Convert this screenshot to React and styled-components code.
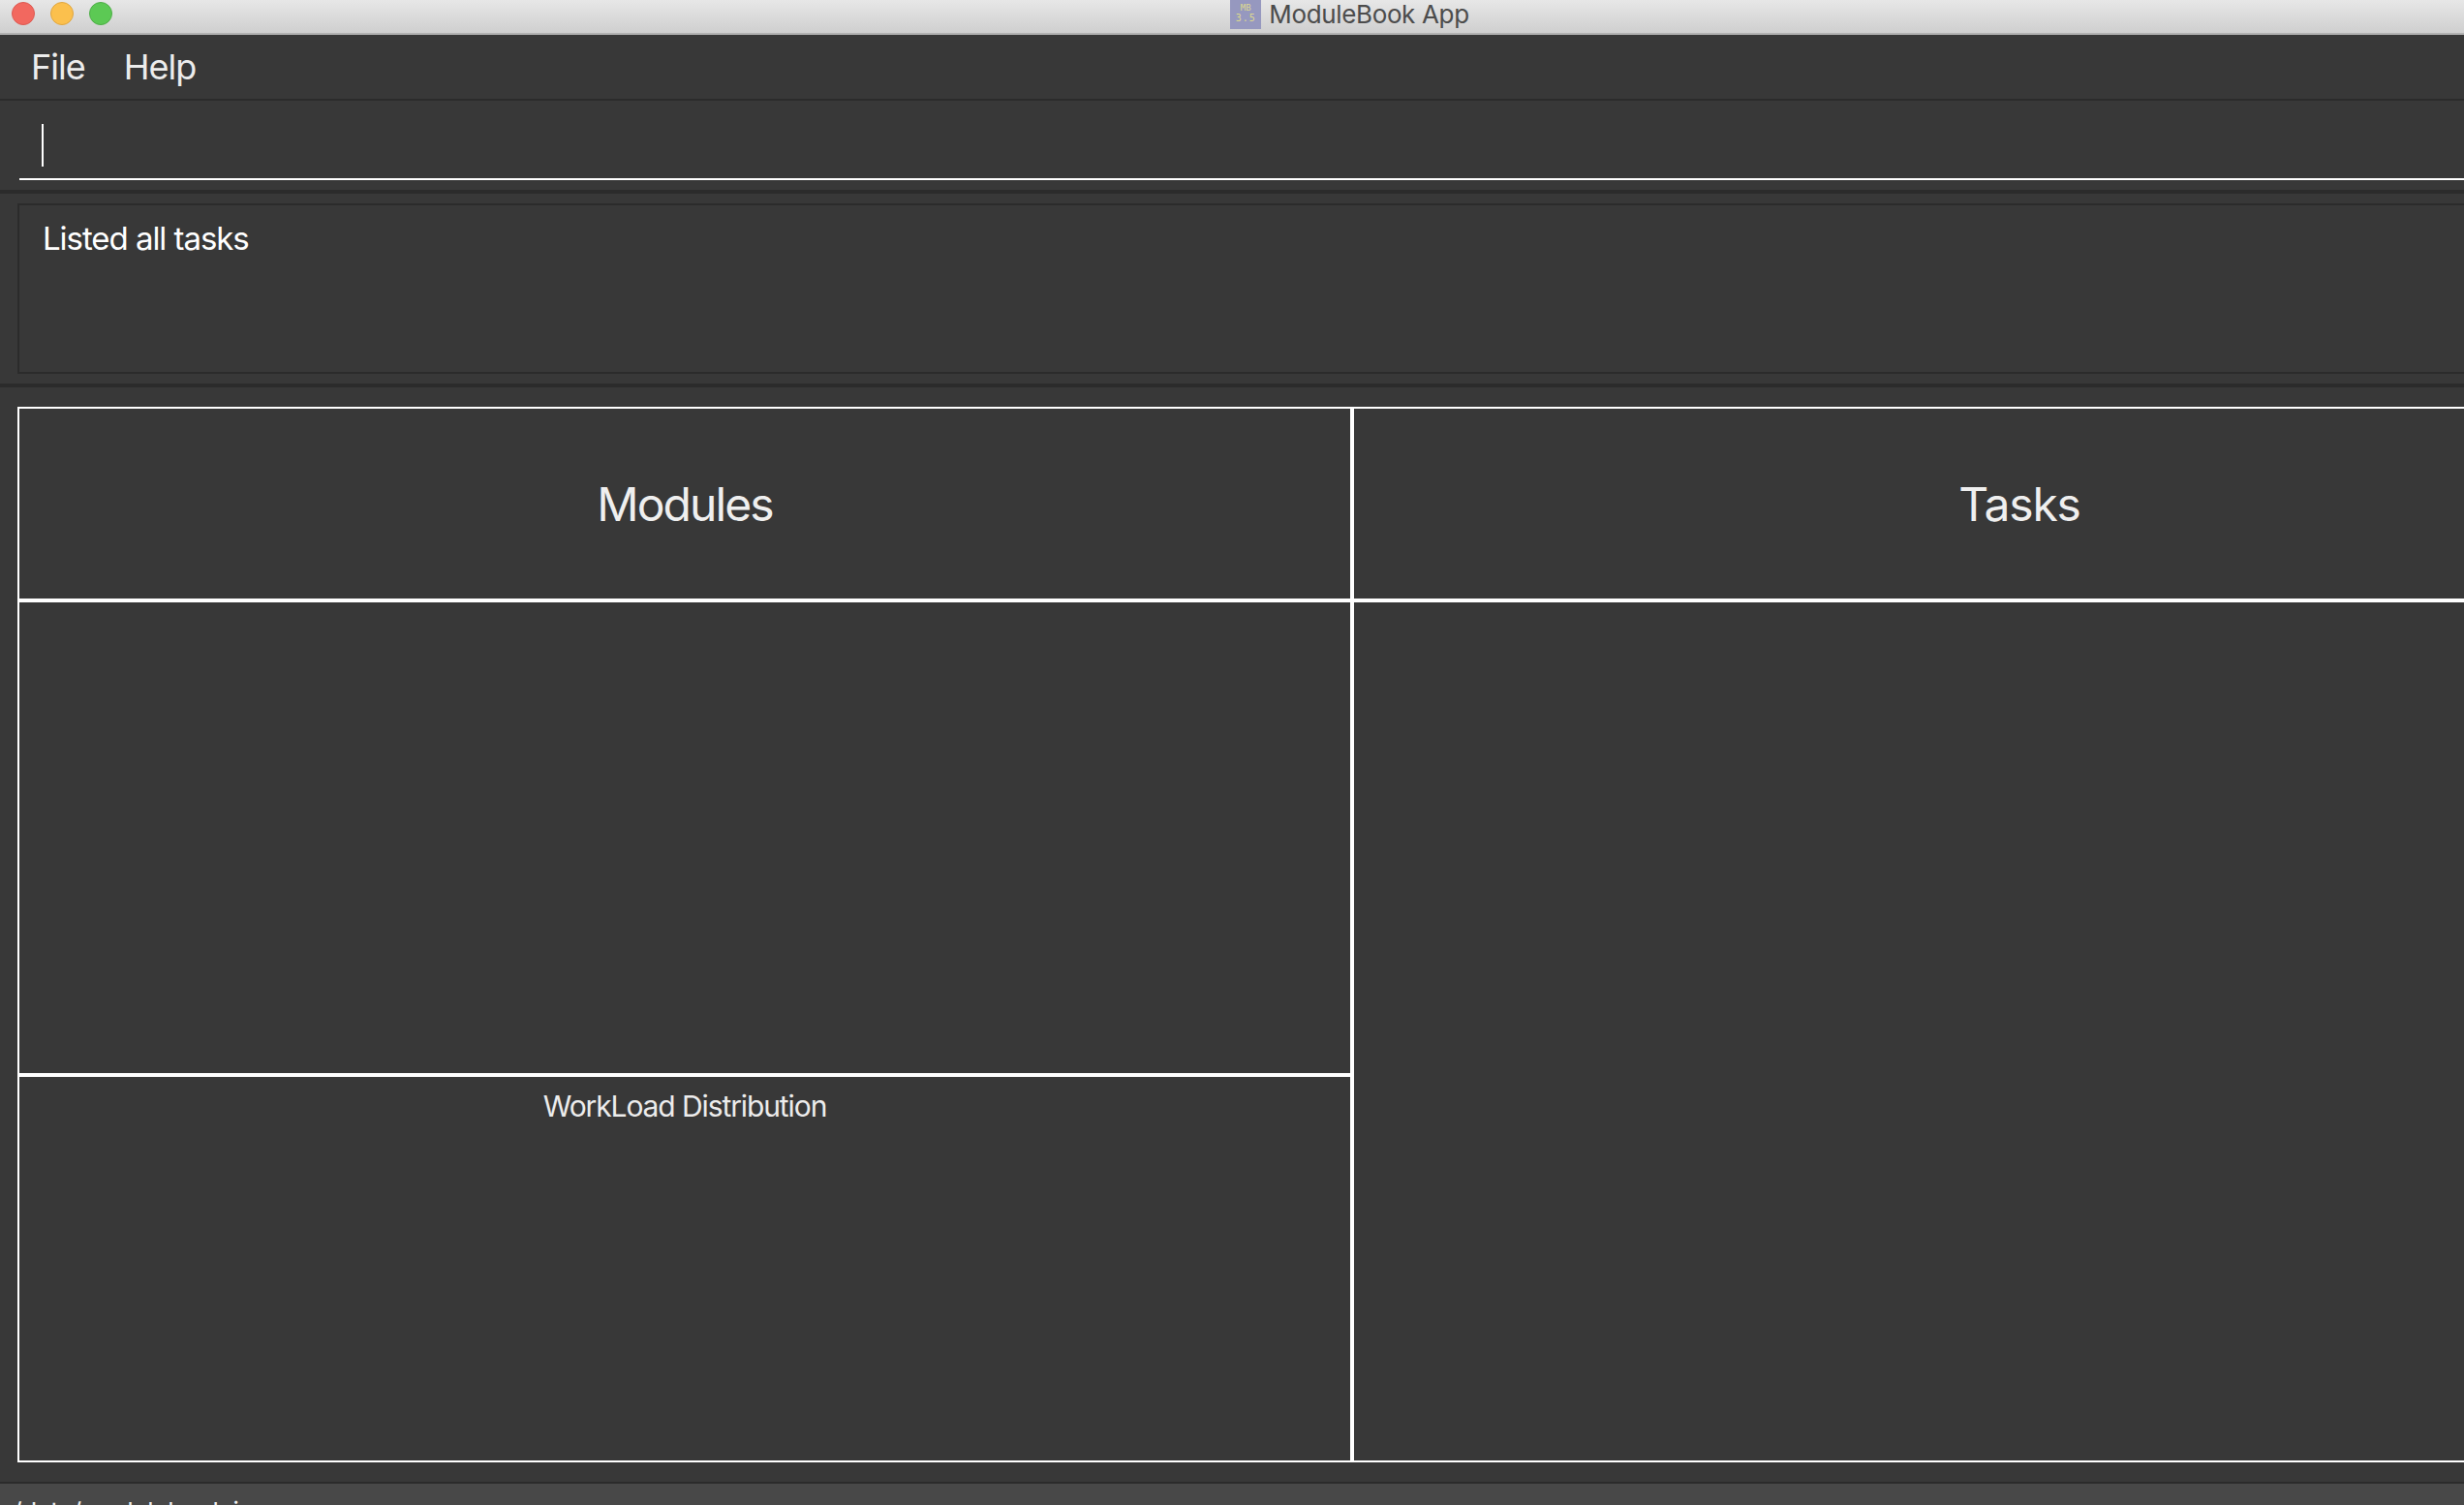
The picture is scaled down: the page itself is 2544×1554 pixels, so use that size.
import React from "react";
import styled, { createGlobalStyle } from "styled-components";

const Global = createGlobalStyle`
  html, body { margin: 0; padding: 0; background: #383838; overflow: hidden; }
  body { font-family: Inter, "Liberation Sans", sans-serif; }
`;

const Viewport = styled.div`
  width: 2544px;
  height: 1554px;
  overflow: hidden;
`;

const Frame = styled.div`
  width: 2792px;
  height: 1554px;
  display: flex;
  flex-direction: column;
  background: #383838;
  overflow: hidden;
`;

const TitleBar = styled.header`
  flex: none;
  position: relative;
  height: 36px;
  box-sizing: border-box;
  display: flex;
  justify-content: center;
  align-items: flex-start;
  gap: 8px;
  padding-right: 5px;
  background: linear-gradient(#e7e7e7, #cfcfcf);
  border-bottom: 2px solid #b1b1b1;
`;

const Lights = styled.div`
  position: absolute;
  left: 12px;
  top: 2px;
  display: flex;
  gap: 16px;
`;

const Light = styled.span`
  width: 24px;
  height: 24px;
  box-sizing: border-box;
  border-radius: 50%;
  background: ${(p) => p.$fill};
  border: 1px solid ${(p) => p.$edge};
`;

const AppIcon = styled.div`
  width: 32px;
  height: 30px;
  background: #9698bf;
  color: #dcd98f;
  font-family: "DejaVu Sans Mono", monospace;
  text-align: center;
  line-height: 1;
  display: flex;
  flex-direction: column;
  align-items: center;
  padding-top: 3px;
  box-sizing: border-box;
`;

const IconTop = styled.span`
  font-size: 9px;
  line-height: 10px;
`;

const IconBottom = styled.span`
  font-size: 10px;
  line-height: 11px;
  letter-spacing: 1px;
`;

const WindowTitle = styled.span`
  font-size: 26px;
  line-height: 30px;
  color: #4c4c4c;
  letter-spacing: -0.35px;
`;

const MenuBar = styled.nav`
  flex: none;
  height: 68px;
  box-sizing: border-box;
  display: flex;
  align-items: center;
  gap: 40px;
  padding: 0 0 1px 32px;
  border-bottom: 2px solid #2b2b2b;
`;

const MenuItem = styled.span`
  font-size: 36px;
  letter-spacing: -1px;
  color: #ececec;
`;

const CommandPane = styled.section`
  flex: none;
  height: 92px;
  box-sizing: border-box;
  padding: 0 0 10px 20px;
`;

const CommandInput = styled.div`
  height: 82px;
  box-sizing: border-box;
  border-bottom: 2px solid #ffffff;
  display: flex;
  align-items: flex-start;
  padding: 24px 0 0 23px;
`;

const Caret = styled.div`
  width: 2px;
  height: 44px;
  background: #ffffff;
`;

const ResultPane = styled.section`
  flex: none;
  height: 200px;
  box-sizing: border-box;
  border-top: 4px solid #2b2b2b;
  padding: 10px 0 10px 18px;
`;

const ResultBox = styled.div`
  height: 176px;
  box-sizing: border-box;
  border: 2px solid #2b2b2b;
  padding: 13px 0 0 24px;
  font-size: 33px;
  line-height: 42px;
  letter-spacing: -1.05px;
  color: #ffffff;
`;

const Board = styled.main`
  flex: none;
  height: 1136px;
  box-sizing: border-box;
  border-top: 4px solid #2b2b2b;
  border-bottom: 2px solid #2b2b2b;
  padding: 20px 0 20px 18px;
`;

const BoardGrid = styled.div`
  width: 2754px;
  height: 1090px;
  box-sizing: border-box;
  display: grid;
  grid-template-columns: 1374px 1374px;
  grid-template-rows: 196px 486px 396px;
  gap: 4px;
  padding: 2px;
  background: #ffffff;
`;

const Cell = styled.div`
  background: #383838;
  ${(p) => p.$tall && "grid-row: 2 / span 2; grid-column: 2;"}
`;

const HeaderCell = styled(Cell)`
  display: flex;
  align-items: center;
  justify-content: center;
  font-size: 48px;
  letter-spacing: ${(p) => p.$spacing};
  color: #efefef;
`;

const WorkloadCell = styled(Cell)`
  padding-top: 8px;
  text-align: center;
  font-size: 30px;
  line-height: 44px;
  letter-spacing: -1.1px;
  color: #ececec;
`;

const StatusBar = styled.footer`
  flex: 1;
  min-height: 0;
  background: #484848;
  padding: 9px 0 0 6px;
  font-size: 26px;
  line-height: 40px;
  letter-spacing: -0.3px;
  color: #f0f0f0;
  overflow: hidden;
`;

export default function App() {
  return (
    <Viewport>
      <Global />
      <Frame>
        <TitleBar>
          <Lights>
            <Light $fill="#f2685f" $edge="#dd5a52" />
            <Light $fill="#fbc04d" $edge="#e0a63f" />
            <Light $fill="#5cc954" $edge="#4fae48" />
          </Lights>
          <AppIcon>
            <IconTop>MB</IconTop>
            <IconBottom>3.5</IconBottom>
          </AppIcon>
          <WindowTitle>ModuleBook App</WindowTitle>
        </TitleBar>
        <MenuBar>
          <MenuItem>File</MenuItem>
          <MenuItem>Help</MenuItem>
        </MenuBar>
        <CommandPane>
          <CommandInput>
            <Caret />
          </CommandInput>
        </CommandPane>
        <ResultPane>
          <ResultBox>Listed all tasks</ResultBox>
        </ResultPane>
        <Board>
          <BoardGrid>
            <HeaderCell $spacing="-1.9px">Modules</HeaderCell>
            <HeaderCell $spacing="-1.2px">Tasks</HeaderCell>
            <Cell />
            <Cell $tall />
            <WorkloadCell>WorkLoad Distribution</WorkloadCell>
          </BoardGrid>
        </Board>
        <StatusBar>./data/modulebook.json</StatusBar>
      </Frame>
    </Viewport>
  );
}
